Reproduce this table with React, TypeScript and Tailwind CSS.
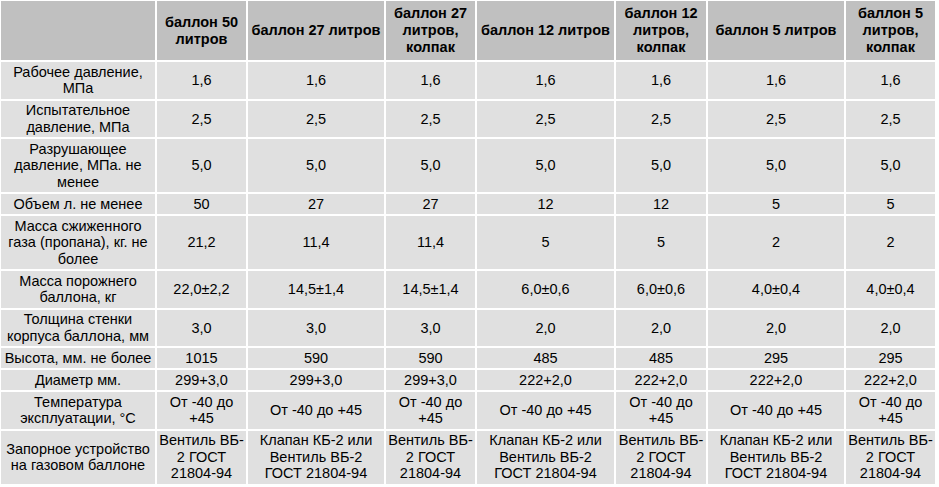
const headers = [
  'баллон 50 литров',
  'баллон 27 литров',
  'баллон 27 литров, колпак',
  'баллон 12 литров',
  'баллон 12 литров, колпак',
  'баллон 5 литров',
  'баллон 5 литров, колпак',
];

const widths = ['w-[154px]', 'w-[89px]', 'w-[136px]', 'w-[89px]', 'w-[137px]', 'w-[90px]', 'w-[136px]', 'w-[89px]'];

// narrow columns: break after the hyphen like the original page does
const valve = (
  <>
    Вентиль ВБ-
    <br />2 ГОСТ
    <br />
    21804-94
  </>
);
const valveAlt = (
  <>
    Клапан КБ-2 или
    <br />
    Вентиль ВБ-2
    <br />
    ГОСТ 21804-94
  </>
);

const rows: { label: string; values: React.ReactNode[] }[] = [
  { label: 'Рабочее давление, МПа', values: ['1,6', '1,6', '1,6', '1,6', '1,6', '1,6', '1,6'] },
  { label: 'Испытательное давление, МПа', values: ['2,5', '2,5', '2,5', '2,5', '2,5', '2,5', '2,5'] },
  { label: 'Разрушающее давление, МПа. не менее', values: ['5,0', '5,0', '5,0', '5,0', '5,0', '5,0', '5,0'] },
  { label: 'Объем л. не менее', values: ['50', '27', '27', '12', '12', '5', '5'] },
  { label: 'Масса сжиженного газа (пропана), кг. не более', values: ['21,2', '11,4', '11,4', '5', '5', '2', '2'] },
  {
    label: 'Масса порожнего баллона, кг',
    values: ['22,0±2,2', '14,5±1,4', '14,5±1,4', '6,0±0,6', '6,0±0,6', '4,0±0,4', '4,0±0,4'],
  },
  { label: 'Толщина стенки корпуса баллона, мм', values: ['3,0', '3,0', '3,0', '2,0', '2,0', '2,0', '2,0'] },
  { label: 'Высота, мм. не более', values: ['1015', '590', '590', '485', '485', '295', '295'] },
  {
    label: 'Диаметр мм.',
    values: ['299+3,0', '299+3,0', '299+3,0', '222+2,0', '222+2,0', '222+2,0', '222+2,0'],
  },
  {
    label: 'Температура эксплуатации, °C',
    values: ['От -40 до +45', 'От -40 до +45', 'От -40 до +45', 'От -40 до +45', 'От -40 до +45', 'От -40 до +45', 'От -40 до +45'],
  },
  {
    label: 'Запорное устройство на газовом баллоне',
    values: [valve, valveAlt, valve, valveAlt, valve, valveAlt, valve],
  },
];

export default function App() {
  return (
    <div className="w-[939px] h-[487px] bg-white overflow-hidden font-['Liberation_Sans',Arial,sans-serif] text-[14.5px] text-black">
      <table className="table-fixed border-separate border-spacing-[2px] w-[938px] -ml-px -mt-px">
        <colgroup>
          {widths.map((w, i) => (
            <col key={i} className={w} />
          ))}
        </colgroup>
        <thead>
          <tr>
            <th className="bg-[#c0c0c0]" />
            {headers.map(h => (
              <th key={h} className="bg-[#c0c0c0] px-[2px] py-[4px] leading-[17px] font-bold text-center align-middle">
                {h}
              </th>
            ))}
          </tr>
        </thead>
        <tbody>
          {rows.map(r => (
            <tr key={r.label}>
              <td className="bg-[#e0e0e0] px-[2px] py-[1.75px] leading-[16.5px] text-center align-middle">{r.label}</td>
              {r.values.map((v, i) => (
                <td key={i} className="bg-[#e0e0e0] px-[2px] py-[1.75px] leading-[16.5px] text-center align-middle">
                  {v}
                </td>
              ))}
            </tr>
          ))}
        </tbody>
      </table>
    </div>
  );
}
